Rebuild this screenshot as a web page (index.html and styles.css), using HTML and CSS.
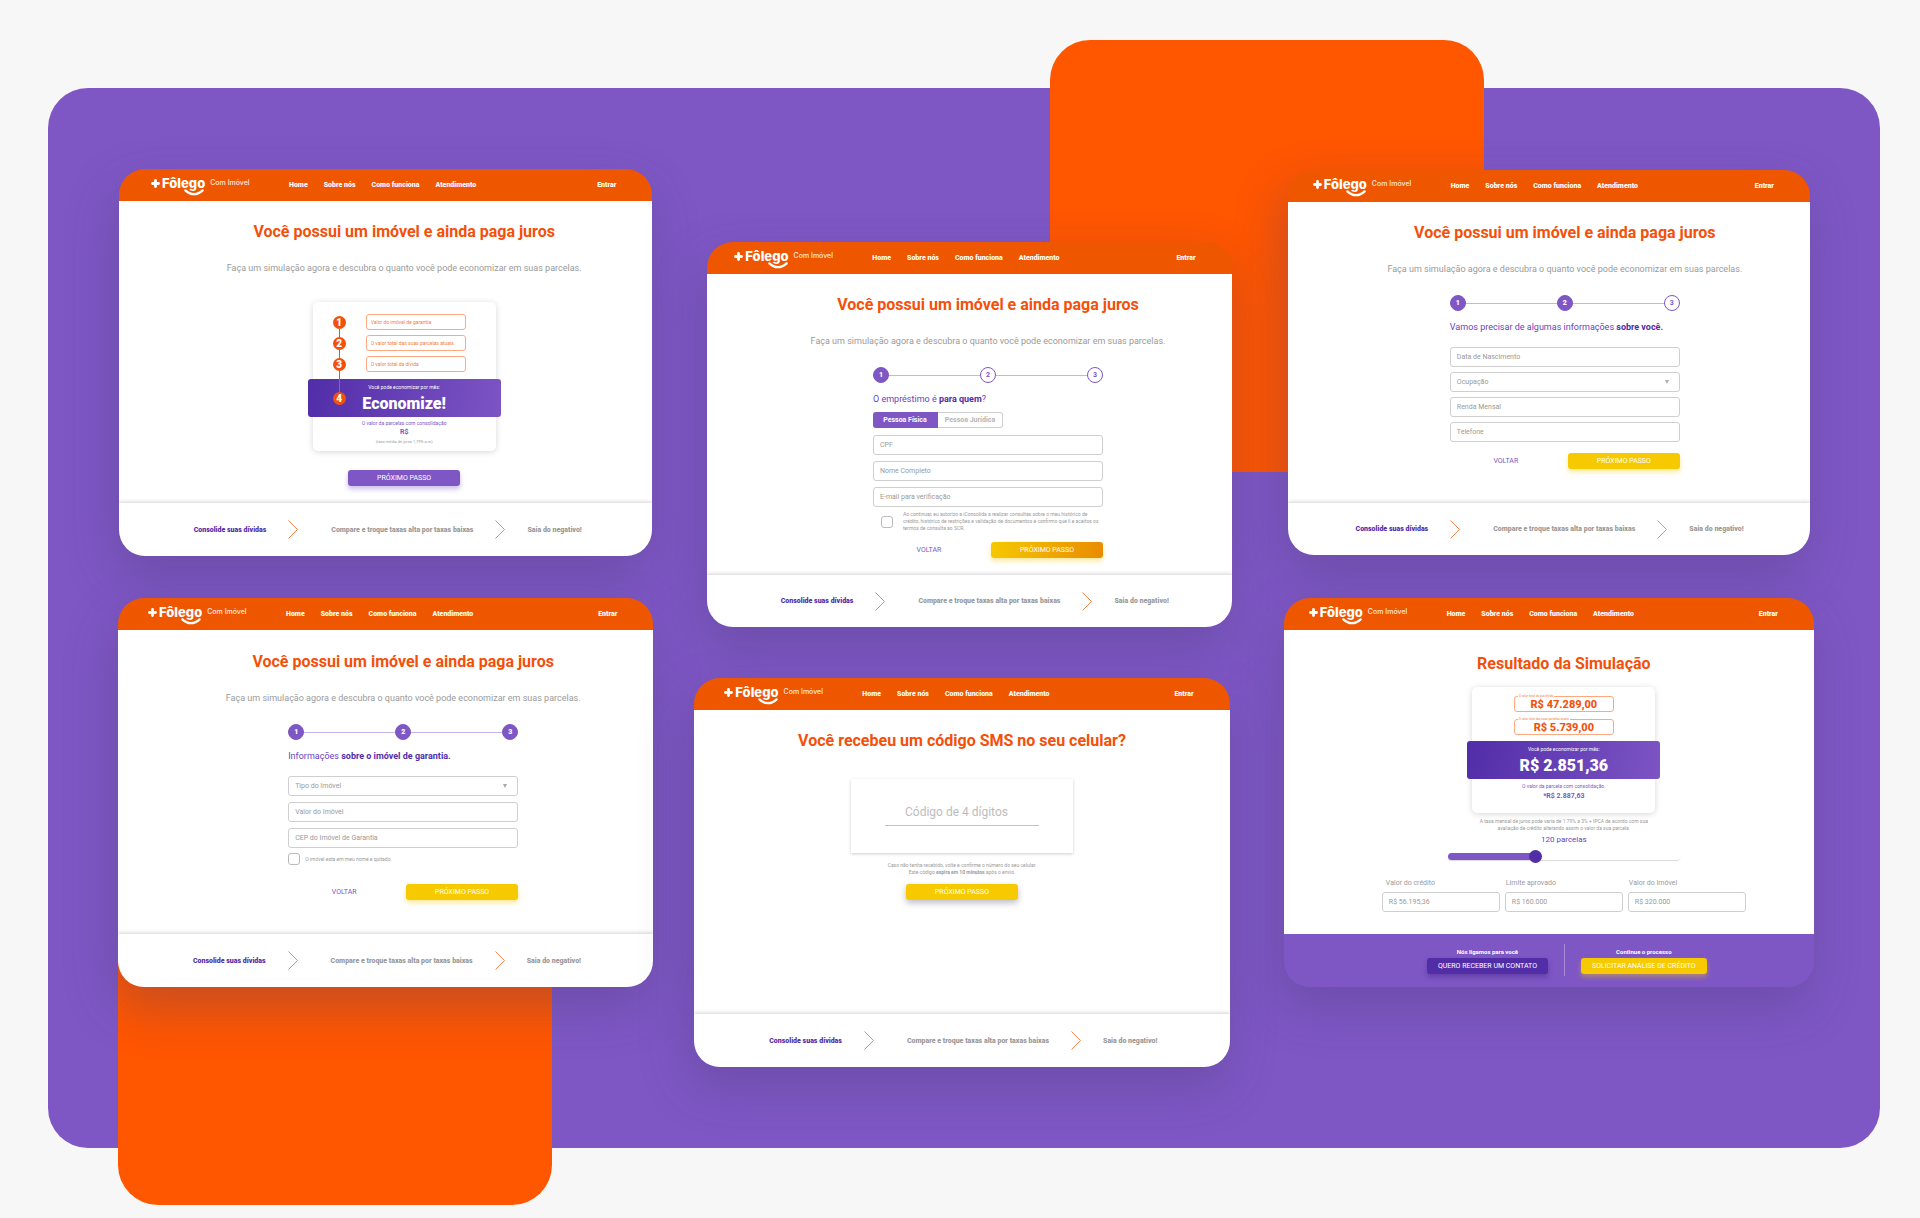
FILE: index.html
```html
<!DOCTYPE html>
<html lang="pt-BR">
<head>
<meta charset="utf-8">
<meta name="viewport" content="width=device-width, initial-scale=1">
<title>+Fôlego Com Imóvel</title>
<link rel="stylesheet" href="styles.css">
</head>
<body>
<svg class="defs" aria-hidden="true">
  <symbol id="plus" viewBox="0 0 8 8"><path d="M4 1.300v5.400M1.300 4h5.400" fill="none" stroke="currentColor" stroke-width="2.500" stroke-linecap="round"/></symbol>
  <symbol id="smile" viewBox="0 0 20 7"><path d="M1.4 1.4C4 4 7 5.2 10 5.2s6-1.2 8.600-3.800" fill="none" stroke="currentColor" stroke-width="2.300" stroke-linecap="round"/></symbol>
  <symbol id="chevron" viewBox="0 0 10 19"><path d="M.5.5l9 9-9 9" fill="none" stroke="currentColor" stroke-width="1"/></symbol>
</svg>
<main class="stage">
  <div class="block block-top"></div>
  <div class="block block-bottom"></div>

  <div class="column column-left">
    <article class="card card-start">
      <header class="bar">
        <a class="logo" href="#"><svg class="plus"><use href="#plus"/></svg><span class="brand">Fôlego<svg class="smile"><use href="#smile"/></svg></span><span class="tag">Com Imóvel</span></a>
        <nav class="nav"><a href="#">Home</a><a href="#">Sobre nós</a><a href="#">Como funciona</a><a href="#">Atendimento</a></nav>
        <a class="login" href="#">Entrar</a>
      </header>
      <div class="content">
        <h2 class="title">Você possui um imóvel e ainda paga juros</h2>
        <p class="lead">Faça um simulação agora e descubra o quanto você pode economizar em suas parcelas.</p>
        <form class="simulator">
          <div class="rows">
            <div class="row"><span class="dot">1</span><input class="mini" aria-label="Valor do imóvel de garantia" placeholder="Valor do imóvel de garantia"></div>
            <div class="row"><span class="dot">2</span><input class="mini" aria-label="O valor total das suas parcelas atuais" placeholder="O valor total das suas parcelas atuais"></div>
            <div class="row"><span class="dot">3</span><input class="mini" aria-label="O valor total da dívida" placeholder="O valor total da dívida"></div>
          </div>
          <div class="banner"><span class="dot">4</span><small>Você pode economizar por mês:</small><strong>Economize!</strong></div>
          <div class="summary"><span>O valor da parcelas com consolidação</span><b>R$</b><small>(taxa média de juros 1,79% a.m)</small></div>
        </form>
        <button class="btn btn-purple btn-start" type="button">PRÓXIMO PASSO</button>
      </div>
      <footer class="trail"><b class="on">Consolide suas dívidas</b><svg class="chevron"><use href="#chevron"/></svg><b class="mid">Compare e troque taxas alta por taxas baixas</b><svg class="chevron"><use href="#chevron"/></svg><b class="end">Saia do negativo!</b></footer>
    </article>

    <article class="card card-home">
      <header class="bar">
        <a class="logo" href="#"><svg class="plus"><use href="#plus"/></svg><span class="brand">Fôlego<svg class="smile"><use href="#smile"/></svg></span><span class="tag">Com Imóvel</span></a>
        <nav class="nav"><a href="#">Home</a><a href="#">Sobre nós</a><a href="#">Como funciona</a><a href="#">Atendimento</a></nav>
        <a class="login" href="#">Entrar</a>
      </header>
      <div class="content">
        <h2 class="title">Você possui um imóvel e ainda paga juros</h2>
        <p class="lead">Faça um simulação agora e descubra o quanto você pode economizar em suas parcelas.</p>
        <form class="form">
          <ol class="steps"><li class="done">1</li><li class="done">2</li><li class="done">3</li></ol>
          <h3 class="ask">Informações <b>sobre o imóvel de garantia.</b></h3>
          <div class="fields">
            <div class="pick"><select aria-label="Tipo do Imóvel"><option>Tipo do Imóvel</option></select></div>
            <input class="field" aria-label="Valor do Imóvel" placeholder="Valor do Imóvel">
            <input class="field" aria-label="CEP do Imóvel de Garantia" placeholder="CEP do Imóvel de Garantia">
          </div>
          <label class="check"><input type="checkbox"><span>O imóvel esta em meu nome e quitado.</span></label>
          <div class="actions"><button class="back" type="button">VOLTAR</button><button class="btn btn-yellow" type="button">PRÓXIMO PASSO</button></div>
        </form>
      </div>
      <footer class="trail"><b class="on">Consolide suas dívidas</b><svg class="chevron"><use href="#chevron"/></svg><b class="mid">Compare e troque taxas alta por taxas baixas</b><svg class="chevron"><use href="#chevron"/></svg><b class="end">Saia do negativo!</b></footer>
    </article>
  </div>

  <div class="column column-middle">
    <article class="card card-who">
      <header class="bar">
        <a class="logo" href="#"><svg class="plus"><use href="#plus"/></svg><span class="brand">Fôlego<svg class="smile"><use href="#smile"/></svg></span><span class="tag">Com Imóvel</span></a>
        <nav class="nav"><a href="#">Home</a><a href="#">Sobre nós</a><a href="#">Como funciona</a><a href="#">Atendimento</a></nav>
        <a class="login" href="#">Entrar</a>
      </header>
      <div class="content">
        <h2 class="title">Você possui um imóvel e ainda paga juros</h2>
        <p class="lead">Faça um simulação agora e descubra o quanto você pode economizar em suas parcelas.</p>
        <form class="form">
          <ol class="steps"><li class="done">1</li><li>2</li><li>3</li></ol>
          <h3 class="ask">O empréstimo é <b>para quem</b>?</h3>
          <div class="toggle">
            <label><input type="radio" name="person" checked><span>Pessoa Física</span></label>
            <label><input type="radio" name="person"><span>Pessoa Jurídica</span></label>
          </div>
          <div class="fields">
            <input class="field" aria-label="CPF" placeholder="CPF">
            <input class="field" aria-label="Nome Completo" placeholder="Nome Completo">
            <input class="field" aria-label="E-mail para verificação" placeholder="E-mail para verificação">
          </div>
          <label class="check consent"><input type="checkbox"><span>Ao continuar, eu autorizo a iConsolida a realizar consultas sobre o meu histórico de<br>crédito, histórico de restrições e validação de documentos e confirmo que li e aceitos os<br>termos de consulta ao SCR.</span></label>
          <div class="actions"><button class="back" type="button">VOLTAR</button><button class="btn btn-yellow btn-hover" type="button">PRÓXIMO PASSO</button></div>
        </form>
      </div>
      <footer class="trail"><b class="on">Consolide suas dívidas</b><svg class="chevron"><use href="#chevron"/></svg><b class="mid">Compare e troque taxas alta por taxas baixas</b><svg class="chevron"><use href="#chevron"/></svg><b class="end">Saia do negativo!</b></footer>
    </article>

    <article class="card card-sms">
      <header class="bar">
        <a class="logo" href="#"><svg class="plus"><use href="#plus"/></svg><span class="brand">Fôlego<svg class="smile"><use href="#smile"/></svg></span><span class="tag">Com Imóvel</span></a>
        <nav class="nav"><a href="#">Home</a><a href="#">Sobre nós</a><a href="#">Como funciona</a><a href="#">Atendimento</a></nav>
        <a class="login" href="#">Entrar</a>
      </header>
      <div class="content">
        <h2 class="title">Você recebeu um código SMS no seu celular?</h2>
        <div class="codebox"><input class="code" aria-label="Código de 4 dígitos" placeholder="Código de 4 dígitos"></div>
        <p class="hint">Caso não tenha recebido, volte e confirme o número do seu celular.<br>Este código <b>expira em 10 minutos</b> após o envio.</p>
        <button class="btn btn-yellow btn-sms" type="button">PRÓXIMO PASSO</button>
      </div>
      <footer class="trail"><b class="on">Consolide suas dívidas</b><svg class="chevron"><use href="#chevron"/></svg><b class="mid">Compare e troque taxas alta por taxas baixas</b><svg class="chevron"><use href="#chevron"/></svg><b class="end">Saia do negativo!</b></footer>
    </article>
  </div>

  <div class="column column-right">
    <article class="card card-you">
      <header class="bar">
        <a class="logo" href="#"><svg class="plus"><use href="#plus"/></svg><span class="brand">Fôlego<svg class="smile"><use href="#smile"/></svg></span><span class="tag">Com Imóvel</span></a>
        <nav class="nav"><a href="#">Home</a><a href="#">Sobre nós</a><a href="#">Como funciona</a><a href="#">Atendimento</a></nav>
        <a class="login" href="#">Entrar</a>
      </header>
      <div class="content">
        <h2 class="title">Você possui um imóvel e ainda paga juros</h2>
        <p class="lead">Faça um simulação agora e descubra o quanto você pode economizar em suas parcelas.</p>
        <form class="form">
          <ol class="steps"><li class="done">1</li><li class="done">2</li><li>3</li></ol>
          <h3 class="ask">Vamos precisar de algumas informações <b>sobre você.</b></h3>
          <div class="fields">
            <input class="field" aria-label="Data de Nascimento" placeholder="Data de Nascimento">
            <div class="pick"><select aria-label="Ocupação"><option>Ocupação</option></select></div>
            <input class="field" aria-label="Renda Mensal" placeholder="Renda Mensal">
            <input class="field" aria-label="Telefone" placeholder="Telefone">
          </div>
          <div class="actions"><button class="back" type="button">VOLTAR</button><button class="btn btn-yellow" type="button">PRÓXIMO PASSO</button></div>
        </form>
      </div>
      <footer class="trail"><b class="on">Consolide suas dívidas</b><svg class="chevron"><use href="#chevron"/></svg><b class="mid">Compare e troque taxas alta por taxas baixas</b><svg class="chevron"><use href="#chevron"/></svg><b class="end">Saia do negativo!</b></footer>
    </article>

    <article class="card card-result">
      <header class="bar">
        <a class="logo" href="#"><svg class="plus"><use href="#plus"/></svg><span class="brand">Fôlego<svg class="smile"><use href="#smile"/></svg></span><span class="tag">Com Imóvel</span></a>
        <nav class="nav"><a href="#">Home</a><a href="#">Sobre nós</a><a href="#">Como funciona</a><a href="#">Atendimento</a></nav>
        <a class="login" href="#">Entrar</a>
      </header>
      <div class="content">
        <h2 class="title">Resultado da Simulação</h2>
        <div class="simulator result">
          <div class="amounts">
            <div class="amount"><label for="debt">O valor total da sua dívida</label><input id="debt" value="R$ 47.289,00"></div>
            <div class="amount"><label for="parts">O valor total das suas parcelas atuais</label><input id="parts" value="R$ 5.739,00"></div>
          </div>
          <div class="banner"><small>Você pode economizar por mês:</small><strong>R$ 2.851,36</strong></div>
          <div class="summary"><span>O valor da parcela com consolidação.</span><b>*R$ 2.887,63</b></div>
        </div>
        <p class="hint rate">A taxa mensal de juros pode varia de 1.79% a 3% + IPCA de acordo com sua<br>avaliação de crédito alterando assim o valor da sua parcela.</p>
        <label class="count" for="months">120 parcelas</label>
        <input class="slider" id="months" type="range" min="0" max="324" value="120">
        <div class="values">
          <label>Valor do crédito<input class="field" value="R$ 56.195,36"></label>
          <label>Limite aprovado<input class="field" value="R$ 160.000"></label>
          <label>Valor do Imóvel<input class="field" value="R$ 320.000"></label>
        </div>
      </div>
      <footer class="offers">
        <div class="offer"><b>Nós ligamos para você</b><button class="btn btn-deep" type="button">QUERO RECEBER UM CONTATO</button></div>
        <div class="offer"><b>Continue o processo</b><button class="btn btn-yellow" type="button">SOLICITAR ANÁLISE DE CRÉDITO</button></div>
      </footer>
    </article>
  </div>
</main>
</body>
</html>
```
FILE: styles.css
```css
:root {
  --purple: #7e57c5;
  --deep: #512da8;
  --orange: #ff5600;
  --bar: #ef5600;
  --title: #f4500a;
  --yellow: #f6c900;
  --grey: #9a9a9a;
  --line: #cfcfcf;
}

* { box-sizing: border-box; }

body {
  margin: 0;
  padding: 88px 40px 70px 48px;
  background: #f7f7f7;
  font-family: Roboto, "Liberation Sans", sans-serif;
  font-size: 7px;
  line-height: 8px;
}

a { color: inherit; text-decoration: none; }
h2, h3, p, ol { margin: 0; padding: 0; font-weight: 400; }
input, select, button { font: inherit; margin: 0; min-width: 0; }
button { border: 0; background: none; padding: 0; cursor: pointer; }
.defs { position: absolute; width: 0; height: 0; }

/* Backdrop */
.stage {
  position: relative;
  display: grid;
  grid-template-columns: minmax(0, 535fr) minmax(0, 538fr) minmax(0, 530fr);
  column-gap: 46px;
  align-items: start;
  padding: 81px 66px 81px 70px;
  background: var(--purple);
  border-radius: 40px;
}
.block {
  position: absolute;
  width: 434px;
  height: 432px;
  border-radius: 40px;
  background: var(--orange);
}
.block-top { top: -48px; left: 1002px; }
.block-bottom { bottom: -57px; left: 70px; }

.column { position: relative; display: flex; flex-direction: column; }
.column-left { gap: 42px; }
.column-middle { gap: 51px; padding-top: 73px; margin: 0 5px 0 -5px; }
.column-right { gap: 43px; padding-top: 1px; }

/* Cards */
.card {
  display: flex;
  flex-direction: column;
  min-height: 387px;
  overflow: hidden;
  border-radius: 26px;
  box-shadow: -4px 20px 50px rgba(70, 60, 110, .32);
}
.card-start { margin: 0 1px; }
.card-home, .card-sms, .card-result { min-height: 389px; }
.card-who { margin: 0 1px 0 13px; }
.card-who, .card-you { min-height: 385px; }
.card-you { margin: 0 4px; }
.card-sms { margin-right: 3px; }

.bar {
  display: flex;
  align-items: center;
  height: 32px;
  padding: 0 36px 0 32px;
  background: var(--bar);
  color: #fff;
  font-weight: 900;
}
.card-home .bar, .card-sms .bar { padding-left: 30px; }
.card-you .bar, .card-result .bar { padding-left: 25px; }
.card-who .bar { padding-left: 27px; }
.logo { display: flex; align-items: center; width: 138px; padding-bottom: 4px; }
.plus { width: 9px; height: 9px; margin-right: 2px; }
.brand {
  position: relative;
  font: 800 13px/14px Inter, sans-serif;
}
.smile { position: absolute; right: 1px; top: 13px; width: 20px; height: 7px; }
.tag { margin-left: 5px; font: 500 7px/8px Inter, sans-serif; white-space: nowrap; opacity: .85; }
.nav { display: flex; gap: 16px; flex: 1; white-space: nowrap; }

.content {
  display: flex;
  flex: 1;
  flex-direction: column;
  align-items: center;
  padding: 22px 0 14px 37px;
  background: #fff;
}
.card-home .content { padding-top: 23px; padding-left: 35px; }
.card-you .content { padding-left: 32px; }
.card-sms .content { padding-left: 0; }
.card-result .content { padding: 25px 0 18px 30px; }

.title { color: var(--title); font-size: 16px; line-height: 18px; font-weight: 700; white-space: nowrap; }
.lead { margin-top: 22px; color: var(--grey); font-size: 9px; line-height: 10px; white-space: nowrap; }

/* Simulator */
.simulator {
  position: relative;
  width: 183px;
  margin-top: 29px;
  padding: 12px 0 6px;
  border-radius: 5px;
  background: #fff;
  box-shadow: 0 1px 6px rgba(0, 0, 0, .16);
}
.rows { display: flex; flex-direction: column; gap: 5px; margin-bottom: 7px; }
.row { display: flex; align-items: center; gap: 20px; padding-left: 20px; }
.dot {
  position: relative;
  width: 13px;
  height: 13px;
  border-radius: 50%;
  background: var(--title);
  color: #fff;
  font-size: 10px;
  line-height: 13px;
  font-weight: 900;
  text-align: center;
}
.dot::after { content: ""; position: absolute; left: 6px; top: 13px; width: 1px; height: 9px; background: var(--title); }
.row:last-child .dot::after { height: 22px; z-index: 1; }
.banner .dot::after { content: none; }
.mini {
  width: 100px;
  height: 16px;
  padding: 0 4px;
  border: 1px solid #ffa880;
  border-radius: 3px;
  background: #fff;
  font-size: 5px;
}
.mini::placeholder { color: #f57c4a; opacity: 1; }
.banner {
  position: relative;
  display: flex;
  flex-direction: column;
  align-items: center;
  gap: 5px;
  height: 38px;
  margin: 0 -5px;
  padding-top: 5px;
  border-radius: 3px;
  background: linear-gradient(100deg, var(--deep), #7c54c4);
  color: #fff;
}
.banner .dot { position: absolute; left: 25px; top: 13px; }
.banner small { font-size: 5px; line-height: 6px; }
.banner strong { font-size: 16px; line-height: 18px; font-weight: 900; }
.summary { display: flex; flex-direction: column; align-items: center; padding-top: 3px; color: var(--purple); }
.summary span { font-size: 5px; line-height: 7px; }
.summary b { font-size: 7px; line-height: 11px; }
.summary small { font-size: 4px; line-height: 7px; color: var(--grey); }

.result { height: 126px; margin-top: 14px; padding-top: 9px; }
.result .summary { gap: 1px; padding-top: 4px; }
.amounts { display: flex; flex-direction: column; align-items: center; gap: 7px; margin-bottom: 6px; }
.amount { position: relative; width: 100px; }
.amount label {
  position: absolute;
  left: 4px;
  top: -2px;
  padding: 0 1px;
  background: #fff;
  color: #f57c4a;
  font-size: 3px;
  line-height: 4px;
  white-space: nowrap;
}
.amount input {
  display: block;
  width: 100%;
  height: 16px;
  padding: 0;
  border: 1px solid #ffa880;
  border-radius: 3px;
  color: var(--title);
  font-size: 11px;
  font-weight: 800;
  text-align: center;
}

/* Buttons */
.btn {
  height: 16px;
  border-radius: 3px;
  color: #fff;
  font-size: 7px;
  line-height: 16px;
  white-space: nowrap;
}
.btn-purple { background: var(--purple); box-shadow: 0 3px 5px rgba(126, 87, 197, .4); }
.btn-yellow { background: var(--yellow); box-shadow: 0 3px 5px rgba(246, 201, 0, .4); }
.btn-hover { background: linear-gradient(100deg, #f6c900, #e98b00); }
.btn-deep { background: var(--deep); box-shadow: 0 3px 5px rgba(50, 20, 110, .35); }
.btn-start { width: 112px; margin-top: 19px; }
.btn-sms { width: 112px; margin-top: 8px; box-shadow: 0 3px 6px rgba(90, 90, 120, .4); }

/* Stepped form */
.form { width: 230px; margin-top: 21px; }
.steps { display: flex; justify-content: space-between; list-style: none; background: linear-gradient(#c5b4e8, #c5b4e8) center / 100% 1px no-repeat; }
.steps li {
  width: 16px;
  height: 16px;
  border: 1px solid var(--purple);
  border-radius: 50%;
  background: #fff;
  color: var(--purple);
  line-height: 14px;
  font-weight: 700;
  text-align: center;
}
.steps .done { background: var(--purple); color: #fff; font-weight: 900; }
.ask { margin-top: 10px; color: #6a3fc0; font-size: 9px; line-height: 12px; white-space: nowrap; }
.ask b { color: var(--deep); }
.fields { display: flex; flex-direction: column; gap: 6px; margin-top: 14px; }
.field, .pick select {
  display: block;
  width: 100%;
  height: 20px;
  padding: 0 6px;
  border: 1px solid var(--line);
  border-radius: 3px;
  background: #fff;
  color: var(--grey);
  font-size: 7px;
}
.field::placeholder { color: var(--grey); opacity: 1; }
.pick { position: relative; }
.pick select { appearance: none; }
.pick::after {
  content: "";
  position: absolute;
  right: 11px;
  top: 8px;
  border: 2px solid transparent;
  border-top: 4px solid #aaa;
  border-bottom: 0;
}
.check { display: flex; align-items: center; gap: 5px; margin-top: 5px; color: var(--grey); font-size: 5px; line-height: 7px; white-space: nowrap; }
.check input {
  flex: none;
  appearance: none;
  width: 12px;
  height: 12px;
  border: 1px solid #bbb;
  border-radius: 3px;
}
.consent { gap: 10px; margin-top: 4px; padding-left: 8px; }
.actions { display: grid; grid-template-columns: 1fr 112px; gap: 6px; margin-top: 19px; }
.card-you .fields { gap: 5px; }
.card-you .actions { margin-top: 11px; }
.card-who .actions { margin-top: 10px; }
.back { color: var(--purple); font-size: 7px; }

.toggle { display: flex; margin-top: 7px; }
.toggle label { position: relative; width: 65px; }
.toggle input { position: absolute; inset: 0; width: 100%; height: 100%; opacity: 0; }
.toggle span {
  display: block;
  height: 16px;
  border: 1px solid var(--line);
  border-left: 0;
  border-radius: 0 3px 3px 0;
  color: #b5b5b5;
  font-weight: 700;
  line-height: 14px;
  text-align: center;
}
.toggle input:checked + span { border-color: var(--purple); border-radius: 3px 0 0 3px; background: var(--purple); color: #fff; }
.card-who .fields { margin-top: 7px; }

/* SMS code */
.codebox { width: 222px; margin-top: 29px; padding: 19px 34px 27px; box-shadow: 0 1px 3px rgba(0, 0, 0, .2); }
.code { display: block; width: 100%; height: 28px; padding: 0 20px; border: 0; border-bottom: 1px solid #c4c4c4; font-size: 12px; }
.code::placeholder { color: #bdbdbd; opacity: 1; }
.hint { margin-top: 9px; color: var(--grey); font-size: 5px; line-height: 7px; text-align: center; }

/* Result */
.rate { margin-top: 5px; }
.count { margin-top: 2px; color: #6a3fc0; font-size: 8px; line-height: 12px; }
.slider {
  appearance: none;
  width: 232px;
  height: 13px;
  margin-top: 4px;
  background: none;
}
.slider::-webkit-slider-runnable-track {
  height: 7px;
  border-radius: 4px;
  background: linear-gradient(90deg, var(--purple) 37%, #fff 37%);
  box-shadow: 0 1px 1px rgba(0, 0, 0, .15);
}
.slider::-webkit-slider-thumb { appearance: none; width: 13px; height: 13px; margin-top: -3px; border-radius: 50%; background: var(--deep); }
.values { display: grid; grid-template-columns: repeat(3, 118px); gap: 5px; margin-top: 16px; color: var(--grey); }
.values label { text-indent: 1px; }
.values label:first-child { text-indent: 4px; }
.values .field { margin-top: 5px; text-indent: 0; }

/* Footers */
.trail {
  display: flex;
  align-items: center;
  height: 53px;
  padding-left: 14%;
  background: #fff;
  box-shadow: 0 -1px 4px rgba(0, 0, 0, .18);
  color: var(--grey);
  white-space: nowrap;
}
.trail b { font-weight: 900; }
.trail .on { color: var(--deep); }
.card-who .trail, .card-you .trail { height: 52px; }
.card-you .trail { padding-left: 13%; }
.chevron { flex: none; width: 10px; height: 19px; margin: 0 22px; color: #f08850; }
.mid { margin-left: 11px; }
.offers { display: flex; justify-content: center; height: 53px; padding: 10px 0 0 36px; background: var(--purple); color: #fff; }
.offer { display: flex; flex-direction: column; align-items: center; gap: 3px; height: 32px; padding: 4px 16px 0; font-size: 6px; line-height: 7px; }
.offer .btn { flex: none; padding: 0 11px; }
.offer + .offer { border-left: 1px solid #a68bd8; }
```
